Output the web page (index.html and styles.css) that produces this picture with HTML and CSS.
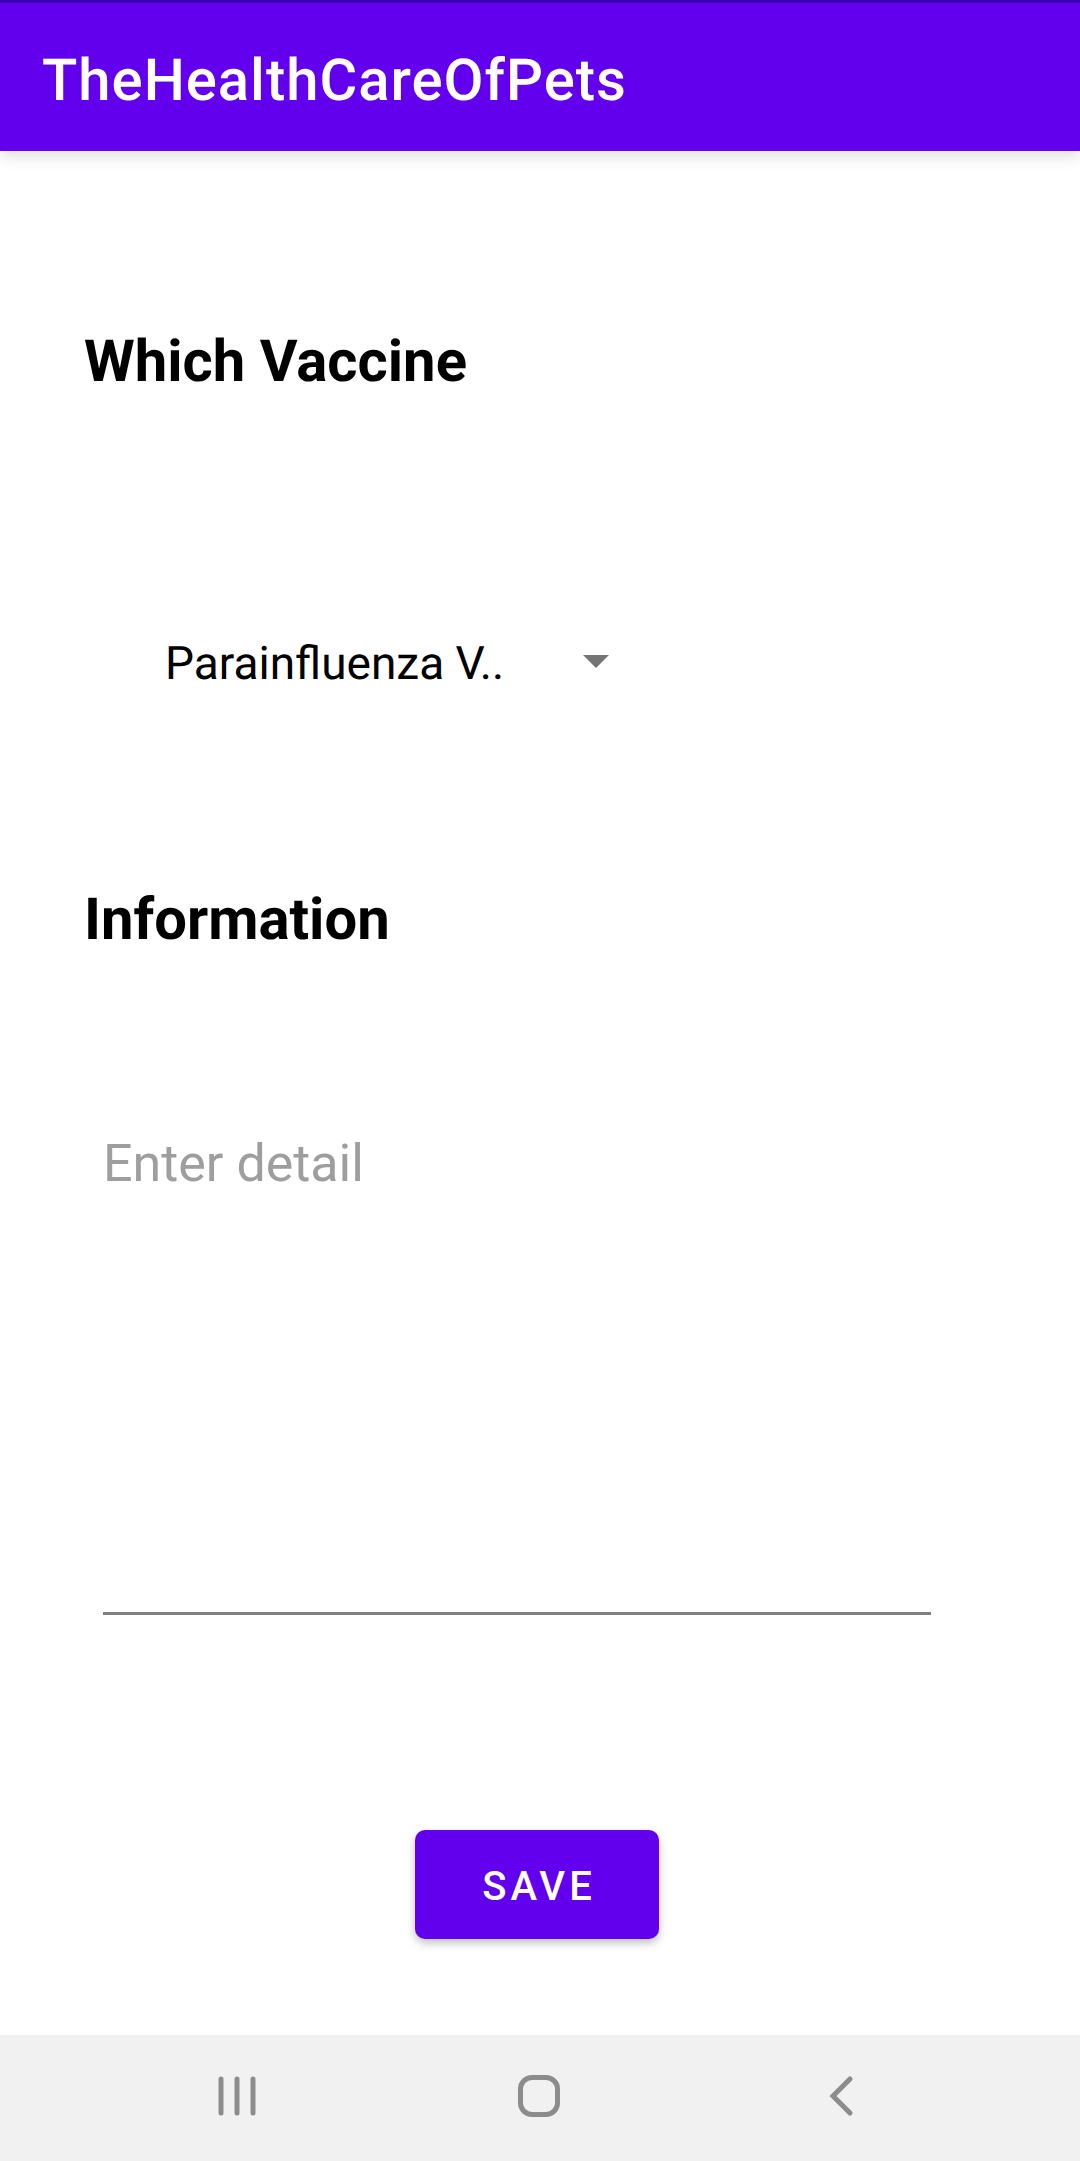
FILE: index.html
```html
<!DOCTYPE html>
<html lang="en">
<head>
<meta charset="utf-8">
<meta name="viewport" content="width=device-width, initial-scale=1">
<title>TheHealthCareOfPets</title>
<link rel="stylesheet" href="styles.css">
</head>
<body>
<header class="app-bar"><h1 class="app-title">TheHealthCareOfPets</h1></header>
<main>
<form class="form">
  <label class="heading" for="vaccine">Which Vaccine</label>
  <div class="picker">
    <select class="picker-select" id="vaccine"><option>Parainfluenza V..</option></select>
    <svg class="picker-arrow" viewBox="0 0 26 13" aria-hidden="true"><path d="M0 0h26L13 13z"/></svg>
  </div>
  <label class="heading" for="detail">Information</label>
  <textarea class="detail" id="detail" placeholder="Enter detail"></textarea>
  <button class="save" type="button">SAVE</button>
</form>
</main>
<nav class="nav-bar" aria-label="System">
  <button class="nav-button" type="button" aria-label="Recent apps"><svg viewBox="0 0 48 48"><path d="M8 7v34M24 7v34M40 7v34"/></svg></button>
  <button class="nav-button" type="button" aria-label="Home"><svg viewBox="0 0 48 48"><rect x="5.5" y="5.5" width="37" height="37" rx="11.5"/></svg></button>
  <button class="nav-button" type="button" aria-label="Back"><svg viewBox="0 0 48 48"><path d="M33 7L16 24l17 17"/></svg></button>
</nav>
</body>
</html>
```
FILE: styles.css
```css
* { box-sizing: border-box; }
body {
  margin: 0;
  min-height: 100vh;
  display: flex;
  flex-direction: column;
  background: #fff;
  color: #000;
  font-family: Roboto, "Liberation Sans", sans-serif;
  text-rendering: geometricPrecision;
}
main { flex: 1; }
.app-bar {
  padding: 44px 42px 36px;
  border-top: 3px solid #3700b3;
  background: #6200ee;
  box-shadow: 0 4px 16px rgba(0, 0, 0, 0.14);
}
.app-title {
  margin: 0;
  color: #fff;
  font-size: 58px;
  font-weight: 500;
  line-height: 68px;
  letter-spacing: 1px;
}
.form { display: flex; flex-direction: column; padding: 173px 90px 0 84px; }
.heading { font-size: 58px; font-weight: 700; line-height: 76px; }
.picker { position: relative; width: 540px; margin: 204px 0 158px; }
.picker-select {
  appearance: none;
  width: 100%;
  height: 120px;
  padding: 0 81px;
  border: 0;
  background: none;
  color: #000;
  font: 400 46px/60px Roboto, sans-serif;
  text-rendering: geometricPrecision;
}
.picker-arrow {
  position: absolute;
  top: 51px;
  right: 15px;
  width: 26px;
  fill: #757575;
  pointer-events: none;
}
.detail {
  height: 493px;
  margin: 164px 59px 215px 19px;
  padding: 8px 0 0;
  border: 0;
  border-bottom: 3px solid #808080;
  background: none;
  color: #000;
  font: 400 52px/68px Roboto, sans-serif;
  resize: none;
}
.detail::placeholder { color: #9e9e9e; opacity: 1; }
.save {
  align-self: center;
  width: 244px;
  height: 109px;
  padding: 4px 0 0 4px;
  border: 0;
  border-radius: 10px;
  background: #6200ee;
  box-shadow: 0 4px 8px rgba(0, 0, 0, 0.25);
  color: #fff;
  font: 500 40px/52px Roboto, sans-serif;
  letter-spacing: 4px;
}
.nav-bar {
  display: flex;
  justify-content: space-around;
  height: 126px;
  padding: 0 88px 4px 86px;
  background: #f1f1f1;
}
.nav-button { width: 120px; padding: 0; border: 0; background: none; }
.nav-button svg {
  width: 48px;
  fill: none;
  stroke: #8c8c8c;
  stroke-width: 5;
  stroke-linecap: round;
  vertical-align: middle;
}
```
